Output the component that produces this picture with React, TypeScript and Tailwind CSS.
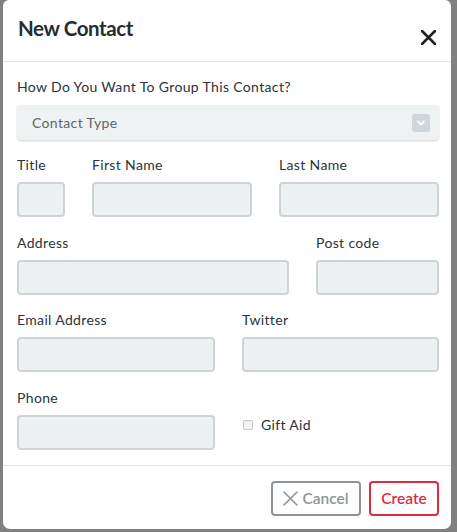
const font = { fontFamily: "Lato, 'Noto Sans', sans-serif" };

function Cross({ size, stroke, className }: { size: number; stroke: number; className?: string }) {
  return (
    <svg width={size} height={size} viewBox={`0 0 ${size} ${size}`} className={className}>
      <path
        d={`M1 1 L${size - 1} ${size - 1} M${size - 1} 1 L1 ${size - 1}`}
        stroke="currentColor"
        strokeWidth={stroke}
        strokeLinecap="round"
        fill="none"
      />
    </svg>
  );
}

function Field({ label, width }: { label: string; width: string }) {
  return (
    <div className={`flex flex-col ${width}`}>
      <label className="h-[18px] text-[14px] leading-[18px] tracking-[0.35px] text-[#2b3439]">{label}</label>
      <div className="mt-[8px] h-[35px] rounded-[4px] border-2 border-[#cdd4d8] bg-[#eef1f2]" />
    </div>
  );
}

export default function App() {
  return (
    <div className="h-[532px] w-[457px] bg-[#808080]" style={font}>
      <div className="ml-[3px] flex h-[529px] w-[448px] flex-col rounded-b-[7px] rounded-t-[6px] bg-white">
        <div className="flex h-[62px] items-start justify-between border-b border-[#e3e6e8] pl-[15px] pr-[15px]">
          <h1 className="mt-[15px] text-[20.5px] font-bold leading-[26px] tracking-[-0.4px] text-[#252d31]">
            New Contact
          </h1>
          <Cross size={15} stroke={2.6} className="mt-[30px] text-[#1f2326]" />
        </div>

        <div className="flex flex-col border-b border-[#e3e6e8] pb-[15px] pl-[14px] pr-[12px] pt-[16px]">
          <p className="h-[18px] text-[14px] leading-[18px] tracking-[0.35px] text-[#2b3439]">
            How Do You Want To Group This Contact?
          </p>
          <div className="mt-[9px] flex h-[35px] w-[422px] items-center justify-between rounded-[4px] bg-[#eff2f3] pl-[15px] pr-[9px] shadow-[0_1px_2px_rgba(0,0,0,0.18)]">
            <span className="text-[14px] tracking-[0.35px] text-[#5d666b]">Contact Type</span>
            <span className="flex h-[18px] w-[18px] items-center justify-center rounded-[3px] bg-[#cfd5d8]">
              <svg width="10" height="10" viewBox="0 0 10 10">
                <path d="M2 3.5 L5 6.5 L8 3.5" fill="none" stroke="white" strokeWidth="1.8" strokeLinecap="round" strokeLinejoin="round" />
              </svg>
            </span>
          </div>

          <div className="mt-[16px] flex gap-[27px]">
            <Field label="Title" width="w-[48px]" />
            <Field label="First Name" width="w-[160px]" />
            <Field label="Last Name" width="w-[160px]" />
          </div>

          <div className="mt-[17px] flex gap-[27px]">
            <Field label="Address" width="w-[272px]" />
            <Field label="Post code" width="w-[123px]" />
          </div>

          <div className="mt-[16px] flex gap-[27px]">
            <Field label="Email Address" width="w-[198px]" />
            <Field label="Twitter" width="w-[197px]" />
          </div>

          <div className="mt-[17px] flex gap-[27px]">
            <Field label="Phone" width="w-[198px]" />
            <div className="flex w-[197px] items-center gap-[8px] self-start pt-[27px]">
              <span className="ml-[1px] h-[10px] w-[10px] rounded-[2px] border border-[#c4c8ca] bg-[#f1f2f3]" />
              <span className="text-[14px] leading-[18px] tracking-[0.35px] text-[#2b3439]">Gift Aid</span>
            </div>
          </div>
        </div>

        <div className="flex justify-end gap-[8px] pr-[12px] pt-[15px]">
          <button className="flex h-[35px] w-[90px] items-center justify-center gap-[4px] rounded-[4px] border-2 border-[#8e9598] text-[15.5px] font-semibold text-[#8e9598]">
            <Cross size={15} stroke={1.6} />
            Cancel
          </button>
          <button className="flex h-[35px] w-[70px] items-center justify-center rounded-[4px] border-2 border-[#e02a3e] text-[15.5px] font-semibold text-[#e02a3e]">
            Create
          </button>
        </div>
      </div>
    </div>
  );
}
